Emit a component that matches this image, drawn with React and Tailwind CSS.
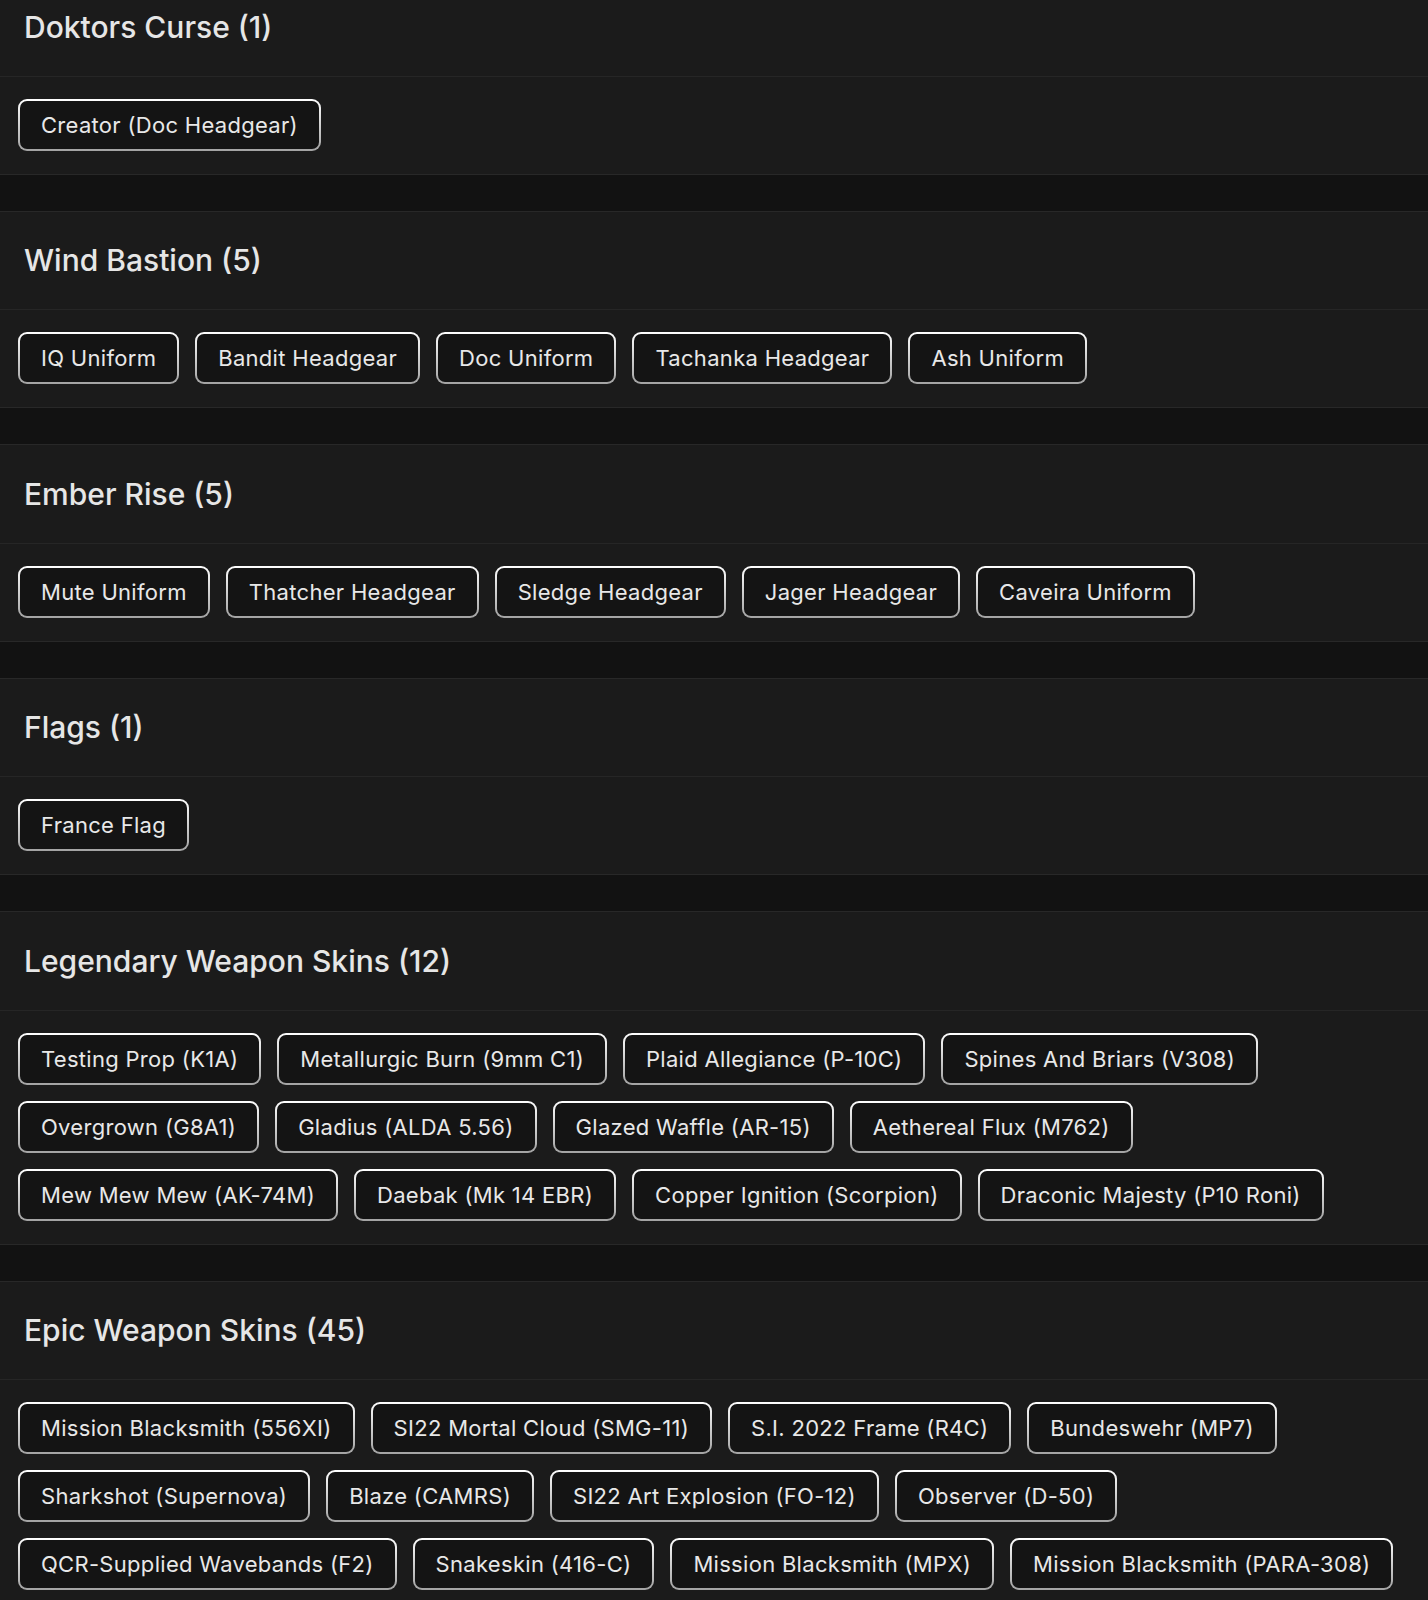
import React from "react";

const sections = [
  { title: "Doktors Curse (1)", rows: [["Creator (Doc Headgear)"]] },
  {
    title: "Wind Bastion (5)",
    rows: [["IQ Uniform", "Bandit Headgear", "Doc Uniform", "Tachanka Headgear", "Ash Uniform"]],
  },
  {
    title: "Ember Rise (5)",
    rows: [["Mute Uniform", "Thatcher Headgear", "Sledge Headgear", "Jager Headgear", "Caveira Uniform"]],
  },
  { title: "Flags (1)", rows: [["France Flag"]] },
  {
    title: "Legendary Weapon Skins (12)",
    rows: [
      ["Testing Prop (K1A)", "Metallurgic Burn (9mm C1)", "Plaid Allegiance (P-10C)", "Spines And Briars (V308)"],
      ["Overgrown (G8A1)", "Gladius (ALDA 5.56)", "Glazed Waffle (AR-15)", "Aethereal Flux (M762)"],
      ["Mew Mew Mew (AK-74M)", "Daebak (Mk 14 EBR)", "Copper Ignition (Scorpion)", "Draconic Majesty (P10 Roni)"],
    ],
  },
  {
    title: "Epic Weapon Skins (45)",
    rows: [
      ["Mission Blacksmith (556XI)", "SI22 Mortal Cloud (SMG-11)", "S.I. 2022 Frame (R4C)", "Bundeswehr (MP7)"],
      ["Sharkshot (Supernova)", "Blaze (CAMRS)", "SI22 Art Explosion (FO-12)", "Observer (D-50)"],
      ["QCR-Supplied Wavebands (F2)", "Snakeskin (416-C)", "Mission Blacksmith (MPX)", "Mission Blacksmith (PARA-308)"],
    ],
  },
];

function Chip({ label }) {
  return (
    <div className="rounded-[9px] bg-linear-to-b from-[#ffffff] to-[#a3a3a3] p-[2px]">
      <div className="rounded-[7px] bg-[#141414] px-[21px] py-[11px] text-[22px] leading-[26px] tracking-[0.3px] text-[#e8e8e8] whitespace-nowrap">
        {label}
      </div>
    </div>
  );
}

function Section({ title, rows }) {
  return (
    <section className="border-y border-[#282828] bg-[#1b1b1b]">
      <div className="flex h-[98.5px] items-center border-b border-[#262626] px-[24px]">
        <h2 className="text-[30px] font-medium leading-none text-[#e6e6e6]">{title}</h2>
      </div>
      <div className="flex flex-col gap-y-4 px-[18px] pt-[22px] pb-[23px]">
        {rows.map((row, i) => (
          <div key={i} className="flex flex-wrap gap-4">
            {row.map((l) => (
              <Chip key={l} label={l} />
            ))}
          </div>
        ))}
      </div>
    </section>
  );
}

export default function App() {
  return (
    <div className="h-[1600px] overflow-hidden bg-[#121212] font-['Inter',sans-serif]">
      <div className="-mt-[23px] flex flex-col gap-[36px]">
        {sections.map((s) => (
          <Section key={s.title} {...s} />
        ))}
      </div>
    </div>
  );
}
